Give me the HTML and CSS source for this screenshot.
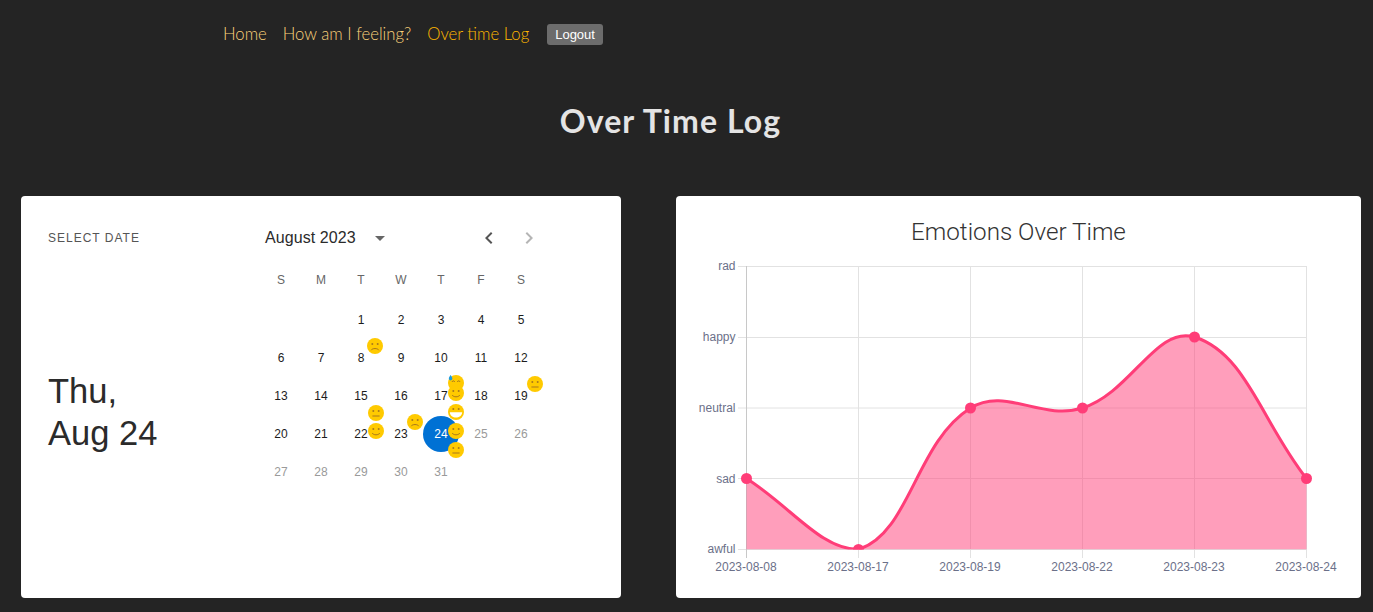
FILE: index.html
```html
<!DOCTYPE html>
<html lang="en">
<head>
  <meta charset="UTF-8">
  <meta name="viewport" content="width=device-width, initial-scale=1.0">
  <title>Over Time Log</title>
  <link rel="stylesheet" href="styles.css">
</head>
<body>
  <svg class="defs" width="0" height="0" aria-hidden="true">
    <symbol id="face-frown" viewBox="0 0 16 16">
      <circle cx="8" cy="8" r="8" fill="#ffca00"/>
      <circle cx="5.3" cy="6" r="1" fill="#a9791c"/>
      <circle cx="10.7" cy="6" r="1" fill="#a9791c"/>
      <path d="M4.2 12.2c1-2.2 6.6-2.2 7.6 0" fill="none" stroke="#a9791c" stroke-width="1"/>
    </symbol>
    <symbol id="face-neutral" viewBox="0 0 16 16">
      <circle cx="8" cy="8" r="8" fill="#ffca00"/>
      <circle cx="5.3" cy="6" r="1" fill="#a9791c"/>
      <circle cx="10.7" cy="6" r="1" fill="#a9791c"/>
      <path d="M4.4 11h7.2" fill="none" stroke="#a9791c" stroke-width="1"/>
    </symbol>
    <symbol id="face-smile" viewBox="0 0 16 16">
      <circle cx="8" cy="8" r="8" fill="#ffca00"/>
      <circle cx="5.3" cy="6" r="1" fill="#a9791c"/>
      <circle cx="10.7" cy="6" r="1" fill="#a9791c"/>
      <path d="M4.2 10c1 2.4 6.6 2.4 7.6 0" fill="none" stroke="#a9791c" stroke-width="1"/>
    </symbol>
    <symbol id="face-grin" viewBox="0 0 16 16">
      <circle cx="8" cy="8" r="8" fill="#ffca00"/>
      <circle cx="5.3" cy="5" r="1" fill="#a9791c"/>
      <circle cx="10.7" cy="5" r="1" fill="#a9791c"/>
      <path d="M1.8 8.2h12.4c-.4 7-12 7-12.4 0z" fill="#fff"/>
    </symbol>
    <symbol id="face-sweat" viewBox="0 0 16 16">
      <circle cx="8" cy="8" r="8" fill="#ffca00"/>
      <path d="M4 7c.5-1.6 2.2-1.6 2.7 0M9.3 7c.5-1.6 2.2-1.6 2.7 0" fill="none" stroke="#a9791c" stroke-width="1"/>
      <path d="M2.6 0c1 1.6 1.8 2.6 1.8 3.6a1.8 1.8 0 0 1-3.6 0C.8 2.6 1.6 1.6 2.6 0z" fill="#1b9be0"/>
    </symbol>
  </svg>

  <nav class="topnav">
    <a class="nav-link" href="#">Home</a>
    <a class="nav-link" href="#">How am I feeling?</a>
    <a class="nav-link active" href="#">Over time Log</a>
    <button class="logout" type="button">Logout</button>
  </nav>

  <h1 class="page-title">Over Time Log</h1>

  <main class="panels">
    <section class="card picker">
      <div class="picker-side">
        <span class="picker-label">Select date</span>
        <div class="picker-date">Thu,<br>Aug 24</div>
      </div>
      <div class="calendar">
        <div class="cal-head">
          <span class="cal-month">August 2023</span>
          <svg class="cal-caret" width="24" height="24" viewBox="0 0 24 24"><path d="M7 10l5 5 5-5z" fill="#666"/></svg>
          <svg class="cal-arrow prev" width="24" height="24" viewBox="0 0 24 24"><path d="M15.41 7.41 14 6l-6 6 6 6 1.41-1.41L10.83 12z" fill="#555"/></svg>
          <svg class="cal-arrow" width="24" height="24" viewBox="0 0 24 24"><path d="M10 6 8.59 7.41 13.17 12l-4.58 4.59L10 18l6-6z" fill="#b5b5b5"/></svg>
        </div>
        <div class="cal-grid cal-week">
          <span>S</span><span>M</span><span>T</span><span>W</span><span>T</span><span>F</span><span>S</span>
        </div>
        <div class="cal-grid cal-days">
          <span class="day"></span><span class="day"></span>
          <span class="day">1</span><span class="day">2</span><span class="day">3</span><span class="day">4</span><span class="day">5</span>

          <span class="day">6</span><span class="day">7</span>
          <span class="day">8<svg class="mood up"><use href="#face-frown"/></svg></span>
          <span class="day">9</span><span class="day">10</span><span class="day">11</span><span class="day">12</span>

          <span class="day">13</span><span class="day">14</span>
          <span class="day">15<svg class="mood below"><use href="#face-neutral"/></svg></span>
          <span class="day">16</span>
          <span class="day">17<svg class="mood upper"><use href="#face-sweat"/></svg><svg class="mood level"><use href="#face-smile"/></svg></span>
          <span class="day">18</span>
          <span class="day">19<svg class="mood up"><use href="#face-neutral"/></svg></span>

          <span class="day">20</span><span class="day">21</span>
          <span class="day">22<svg class="mood level"><use href="#face-smile"/></svg></span>
          <span class="day">23<svg class="mood up"><use href="#face-frown"/></svg></span>
          <span class="day selected">24<svg class="mood top"><use href="#face-grin"/></svg><svg class="mood level"><use href="#face-smile"/></svg><svg class="mood low"><use href="#face-neutral"/></svg></span>
          <span class="day off">25</span><span class="day off">26</span>

          <span class="day off">27</span><span class="day off">28</span><span class="day off">29</span><span class="day off">30</span><span class="day off">31</span>
        </div>
      </div>
    </section>

    <section class="card chart">
      <svg class="chart-svg" width="685" height="402" viewBox="676 196 685 402">
        <text class="chart-title" x="1018.5" y="240" text-anchor="middle">Emotions Over Time</text>

        <g class="grid">
          <path d="M738 266.5H1306.5M738 337.5H1306.5M738 408H1306.5M738 478.5H1306.5M738 549.5H1306.5"/>
          <path d="M858.5 266V558M970.5 266V558M1082.5 266V558M1194.5 266V558M1306.5 266V558"/>
        </g>
        <path class="axis" d="M746.5 266V558"/>

        <g class="tick-y" text-anchor="end">
          <text x="735.5" y="270">rad</text>
          <text x="735.5" y="341">happy</text>
          <text x="735.5" y="412">neutral</text>
          <text x="735.5" y="483">sad</text>
          <text x="735.5" y="553">awful</text>
        </g>
        <g class="tick-x" text-anchor="middle">
          <text x="746" y="571">2023-08-08</text>
          <text x="858" y="571">2023-08-17</text>
          <text x="970" y="571">2023-08-19</text>
          <text x="1082" y="571">2023-08-22</text>
          <text x="1194" y="571">2023-08-23</text>
          <text x="1306" y="571">2023-08-24</text>
        </g>

        <clipPath id="plot-clip"><rect x="740" y="260" width="575" height="289.5"/></clipPath>
        <g clip-path="url(#plot-clip)">
          <path class="area" d="M746.5 478.5C791.3 506.9 820.6 549.5 858.5 549.5C910.2 533.2 915.2 442.9 970.5 408C1004.8 386.3 1041.5 421 1082.5 408C1131.1 392.6 1156.6 325.1 1194.5 337C1246.2 353.3 1261.7 421.9 1306.5 478.5V549.5H746.5Z"/>
          <path class="line" d="M746.5 478.5C791.3 506.9 820.6 549.5 858.5 549.5C910.2 533.2 915.2 442.9 970.5 408C1004.8 386.3 1041.5 421 1082.5 408C1131.1 392.6 1156.6 325.1 1194.5 337C1246.2 353.3 1261.7 421.9 1306.5 478.5"/>
          <circle class="dot" cx="746.5" cy="478.5" r="5.5"/>
          <circle class="dot" cx="858.5" cy="549.5" r="5.5"/>
          <circle class="dot" cx="970.5" cy="408" r="5.5"/>
          <circle class="dot" cx="1082.5" cy="408" r="5.5"/>
          <circle class="dot" cx="1194.5" cy="337" r="5.5"/>
          <circle class="dot" cx="1306.5" cy="478.5" r="5.5"/>
        </g>
      </svg>
    </section>
  </main>
</body>
</html>
```

FILE: styles.css
```css
* {
  box-sizing: border-box;
}
body {
  margin: 0;
  background: #242424;
  font-family: "Liberation Sans", sans-serif;
}
.defs {
  position: absolute;
}
.topnav {
  display: flex;
  align-items: center;
  gap: 16px;
  height: 68px;
  padding-left: 223px;
}
.nav-link {
  font-family: Lato, sans-serif;
  font-weight: 300;
  font-size: 16.7px;
  color: #fbd27a;
  text-decoration: none;
}
.nav-link.active {
  color: #ffb800;
}
.logout {
  height: 21px;
  margin-left: 2px;
  padding: 0 8px;
  border: 0;
  border-radius: 3px;
  background: #6c6c6c;
  color: #fff;
  font-family: "Liberation Sans", sans-serif;
  font-size: 13px;
}
.page-title {
  margin: 32px 0 54px;
  padding-right: 32px;
  text-align: center;
  font-family: Lato, sans-serif;
  font-weight: 700;
  font-size: 32px;
  line-height: 42px;
  letter-spacing: 1.1px;
  color: #e4e4e4;
}
.panels {
  display: grid;
  grid-template-columns: 600px 685px;
  gap: 55px;
  padding: 0 12px 14px 21px;
}
.card {
  height: 402px;
  background: #fff;
  border-radius: 4px;
}
.picker {
  display: flex;
}
.picker-side {
  width: 240px;
  padding: 36px 0 0 27px;
}
.picker-label {
  display: block;
  font-size: 12px;
  line-height: 12px;
  letter-spacing: 1px;
  text-transform: uppercase;
  color: #555;
}
.picker-date {
  margin-top: 126px;
  font-size: 34.5px;
  line-height: 42px;
  color: #2b2b2b;
}
.calendar {
  width: 280px;
}
.cal-head {
  display: flex;
  align-items: center;
  height: 24px;
  margin-top: 30px;
  padding-left: 4px;
}
.cal-month {
  font-size: 16px;
  letter-spacing: 0.08px;
  color: #2b2b2b;
}
.cal-caret {
  margin-left: 12px;
}
.cal-arrow {
  margin-left: 16px;
}
.cal-arrow.prev {
  margin-left: 85px;
}
.cal-grid {
  display: grid;
  grid-template-columns: repeat(7, 40px);
  justify-items: center;
  align-items: center;
}
.cal-week {
  height: 40px;
  margin-top: 10px;
  font-size: 12px;
  color: #666;
}
.cal-days {
  grid-auto-rows: 38px;
  margin-top: 1px;
  font-size: 12px;
  color: #1c1c1c;
}
.day {
  position: relative;
  display: flex;
  align-items: center;
  justify-content: center;
  width: 36px;
  height: 36px;
  border-radius: 50%;
}
.day.off {
  color: #9a9a9a;
}
.day.selected {
  background: #0071d4;
  color: #fff;
}
.mood {
  position: absolute;
  left: 25px;
  width: 16px;
  height: 16px;
}
.mood.upper { top: -3px; }
.mood.top { top: -12px; }
.mood.up { top: -2px; left: 24px; }
.mood.level { top: 7px; }
.mood.low { top: 26px; }
.mood.below { top: 27px; }
.chart-svg {
  display: block;
}
.chart-title {
  font-family: Roboto, sans-serif;
  font-weight: 300;
  font-size: 24.2px;
  fill: #333;
}
.grid path {
  fill: none;
  stroke: #e2e2e2;
  stroke-width: 1;
}
.axis {
  fill: none;
  stroke: #c8c8c8;
  stroke-width: 1;
}
.tick-y text,
.tick-x text {
  font-size: 12px;
  fill: #6b7089;
}
.area {
  fill: #ff3d78;
  fill-opacity: 0.5;
}
.line {
  fill: none;
  stroke: #ff3d78;
  stroke-width: 3;
}
.dot {
  fill: #ff3d78;
}
```
